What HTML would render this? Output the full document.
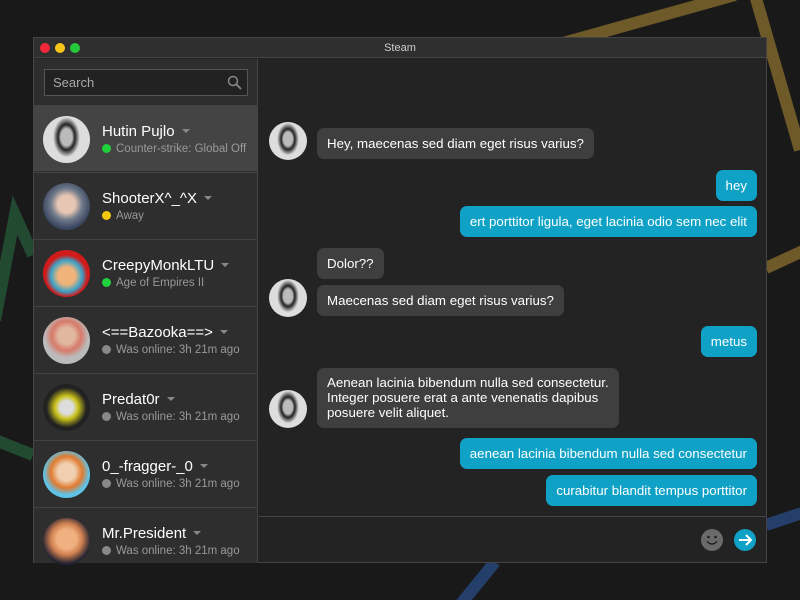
<!DOCTYPE html>
<html><head><meta charset="utf-8"><style>
*{margin:0;padding:0;box-sizing:border-box}
body{width:800px;height:600px;background:#19191a;font-family:"Liberation Sans",Arial,sans-serif;position:relative;overflow:hidden}
.abs{position:absolute}
.win{left:33px;top:37px;width:734px;height:526px;background:#232323;border:1px solid #444}
.title{left:0;top:0;width:732px;height:20px;background:#2f2f2f;border-bottom:1px solid #444;color:#ccc;font-size:11px;text-align:center;line-height:20px}
.dot{top:5px;width:10px;height:10px;border-radius:50%}
.side{left:0;top:21px;width:224px;height:504px;background:#2e2e2e;border-right:1px solid #444}
.search{left:10px;top:10px;width:204px;height:27px;background:#222;border:1px solid #555;color:#aaa;font-size:13px;line-height:25px;padding-left:8px}
.row{left:0;width:224px;height:66px;border-top:1px solid #424242}
.av{left:9px;top:10px;width:47px;height:47px;border-radius:50%}
.nm{left:68px;top:17px;color:#fff;font-size:15px}
.nm i{display:inline-block;width:0;height:0;border-left:4px solid transparent;border-right:4px solid transparent;border-top:4px solid #888;margin-left:7px;vertical-align:3px}
.st{left:68px;top:37px;color:#999;font-size:11.5px;white-space:nowrap}
.st b{display:inline-block;width:9px;height:9px;border-radius:50%;margin-right:5px;vertical-align:-1px}
.b{position:absolute;font-size:13.3px;color:#fff;padding:0 10px;line-height:31px;border-radius:7px;white-space:nowrap}
.d{background:#3f3f3f}.u{background:#0fa2c6}
.ca{width:38px;height:38px;border-radius:50%;background:radial-gradient(ellipse 30% 45% at 50% 45%,#bbb 0 40%,#222 60%,#ddd 95%)}
</style></head><body>
<svg class="abs" style="left:0;top:0" width="800" height="600">
<g fill="none" stroke-width="12" stroke-linecap="butt">
<path d="M545 48 L735 -5" stroke="#6e5a28"/>
<path d="M755 -5 L800 150" stroke="#6e5a28"/>
<path d="M766 268 L805 250" stroke="#6e5a28"/>
<path d="M-5 320 L15 215 L33 255" stroke="#214a30"/>
<path d="M-5 440 L33 455" stroke="#214a30"/>
<path d="M460 605 L495 562" stroke="#24406a"/>
<path d="M766 525 L805 512" stroke="#24406a"/>
</g></svg>
<div class="abs win">
<div class="abs title">Steam</div>
<div class="abs dot" style="left:6px;background:#f2283a"></div>
<div class="abs dot" style="left:21px;background:#f7c51a"></div>
<div class="abs dot" style="left:36px;background:#26c93c"></div>
<div class="abs side">
<div class="abs search">Search
<svg class="abs" style="right:5px;top:5px" width="15" height="15"><circle cx="6" cy="6" r="4.5" stroke="#888" stroke-width="1.5" fill="none"/><path d="M9.5 9.5 L14 14" stroke="#888" stroke-width="1.8"/></svg></div>
<div class="abs row" style="top:46px;background:#444">
<div class="abs av" style="background:radial-gradient(ellipse 30% 45% at 50% 45%,#bbb 0 40%,#222 60%,#ddd 95%)"></div>
<div class="abs nm">Hutin Pujlo<i></i></div><div class="abs st"><b style="background:#1fd13a"></b>Counter-strike: Global Off</div></div>
<div class="abs row" style="top:113px">
<div class="abs av" style="background:radial-gradient(circle at 50% 45%,#e7c6b3 0 25%,#6f7a8a 45%,#3a4560 70%)"></div>
<div class="abs nm">ShooterX^_^X<i></i></div><div class="abs st"><b style="background:#f3c80f"></b>Away</div></div>
<div class="abs row" style="top:180px">
<div class="abs av" style="background:radial-gradient(circle at 50% 55%,#f0b47a 0 25%,#3aa3c8 45%,#d11a1a 60%)"></div>
<div class="abs nm">CreepyMonkLTU<i></i></div><div class="abs st"><b style="background:#1fd13a"></b>Age of Empires II</div></div>
<div class="abs row" style="top:247px">
<div class="abs av" style="background:radial-gradient(circle at 50% 40%,#e0b8a0 0 22%,#d77a6a 40%,#bbb 60%)"></div>
<div class="abs nm">&lt;==Bazooka==&gt;<i></i></div><div class="abs st"><b style="background:#888"></b>Was online: 3h 21m ago</div></div>
<div class="abs row" style="top:314px">
<div class="abs av" style="background:radial-gradient(circle at 50% 50%,#ddd 0 20%,#c9c21a 35%,#222 60%)"></div>
<div class="abs nm">Predat0r<i></i></div><div class="abs st"><b style="background:#888"></b>Was online: 3h 21m ago</div></div>
<div class="abs row" style="top:381px">
<div class="abs av" style="background:radial-gradient(circle at 50% 45%,#f0d0b0 0 25%,#e07a30 45%,#5ec3e8 65%)"></div>
<div class="abs nm">0_-fragger-_0<i></i></div><div class="abs st"><b style="background:#888"></b>Was online: 3h 21m ago</div></div>
<div class="abs row" style="top:448px">
<div class="abs av" style="background:radial-gradient(circle at 50% 45%,#f0b080 0 28%,#d08050 45%,#223 70%)"></div>
<div class="abs nm">Mr.President<i></i></div><div class="abs st"><b style="background:#888"></b>Was online: 3h 21m ago</div></div>
</div>
<div class="abs" style="left:225px;top:478px;width:507px;height:1px;background:#444"></div>
</div>
<div class="abs ca" style="left:269px;top:122px"></div>
<div class="abs ca" style="left:269px;top:279px"></div>
<div class="abs ca" style="left:269px;top:390px"></div>
<div class="b d" style="left:317px;top:128px">Hey, maecenas sed diam eget risus varius?</div>
<div class="b u" style="right:43px;top:170px">hey</div>
<div class="b u" style="right:43px;top:206px">ert porttitor ligula, eget lacinia odio sem nec elit</div>
<div class="b d" style="left:317px;top:248px">Dolor??</div>
<div class="b d" style="left:317px;top:285px">Maecenas sed diam eget risus varius?</div>
<div class="b u" style="right:43px;top:326px">metus</div>
<div class="b d" style="left:317px;top:368px;line-height:15px;padding:7px 10px;height:60px">Aenean lacinia bibendum nulla sed consectetur.<br>Integer posuere erat a ante venenatis dapibus<br>posuere velit aliquet.</div>
<div class="b u" style="right:43px;top:438px">aenean lacinia bibendum nulla sed consectetur</div>
<div class="b u" style="right:43px;top:475px">curabitur blandit tempus porttitor</div>
<svg class="abs" style="left:700px;top:528px" width="60" height="24">
<circle cx="12" cy="12" r="11" fill="#6a6a6a"/><circle cx="8.5" cy="9" r="1.3" fill="#222"/><circle cx="15.5" cy="9" r="1.3" fill="#222"/><path d="M7 13.5 Q12 18.5 17 13.5" stroke="#222" stroke-width="1.4" fill="none"/>
<circle cx="45" cy="12" r="11" fill="#0fa2c6"/><path d="M39 12 H51 M46 7 L51 12 L46 17" stroke="#fff" stroke-width="2" fill="none"/>
</svg>
</body></html>
